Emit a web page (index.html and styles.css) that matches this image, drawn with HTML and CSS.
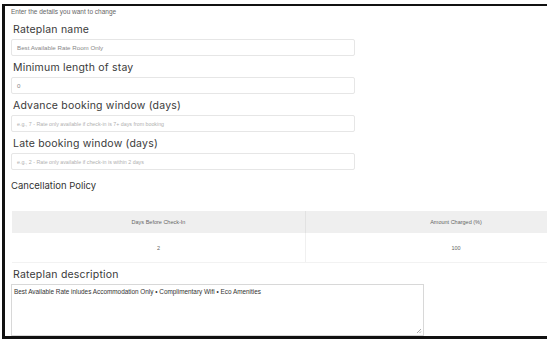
FILE: index.html
```html
<!DOCTYPE html>
<html lang="en">
<head>
    <meta charset="UTF-8">
    <meta name="viewport" content="width=device-width, initial-scale=1.0">
    <title>Edit Rateplan</title>
    <link rel="stylesheet" href="styles.css">
</head>
<body>
    <div class="frame">
        <p class="intro">Enter the details you want to change</p>

        <label class="field-label">Rateplan name</label>
        <div class="field-input">Best Available Rate Room Only</div>

        <label class="field-label">Minimum length of stay</label>
        <div class="field-input">0</div>

        <label class="field-label">Advance booking window (days)</label>
        <div class="field-input placeholder">e.g., 7 - Rate only available if check-in is 7+ days from booking</div>

        <label class="field-label">Late booking window (days)</label>
        <div class="field-input placeholder">e.g., 2 - Rate only available if check-in is within 2 days</div>

        <h3 class="section-title">Cancellation Policy</h3>

        <table class="policy-table">
            <thead>
                <tr>
                    <th class="col-days">Days Before Check-In</th>
                    <th>Amount Charged (%)</th>
                </tr>
            </thead>
            <tbody>
                <tr>
                    <td>2</td>
                    <td>100</td>
                </tr>
            </tbody>
        </table>

        <label class="field-label desc-label">Rateplan description</label>
        <div class="desc-box">
            Best Available Rate inludes Accommodation Only • Complimentary Wifi • Eco Amenities
            <svg class="grip" width="6" height="6" viewBox="0 0 6 6">
                <path d="M5 1 L1 5 M5 3.5 L3.5 5" stroke="#999" stroke-width="0.8"/>
            </svg>
        </div>
    </div>
</body>
</html>
```

FILE: styles.css
```css
body {
    margin: 0;
    background: #fff;
    overflow: hidden;
    font-family: "Inter", "Liberation Sans", sans-serif;
    color: #333;
}
.frame {
    margin: 4px 0 0 2px;
    width: 640px;
    height: 335px;
    box-sizing: border-box;
    border-top: 2px solid #111;
    border-left: 3px solid #111;
    border-bottom: 3px solid #111;
    padding: 2px 0 0 6px;
    display: flex;
    flex-direction: column;
    align-items: flex-start;
}
.intro {
    margin: 0;
    line-height: 8px;
    font-family: "Liberation Sans", sans-serif;
    font-size: 6.5px;
    color: #666;
}
.field-label {
    display: block;
    font-size: 10.5px;
    line-height: 13px;
    color: #3a3a3a;
    margin: 5px 0 3px 2px;
    letter-spacing: 0.2px;
}
.field-label:first-of-type {
    margin-top: 7px;
}
.field-input {
    width: 344px;
    height: 17px;
    box-sizing: border-box;
    border: 1px solid #e6e6e6;
    border-radius: 2px;
    padding: 0 5px;
    display: flex;
    align-items: center;
    font-family: "Liberation Sans", sans-serif;
    font-size: 6.2px;
    color: #888;
}
.placeholder {
    font-size: 5.3px;
    color: #b0b0b0;
}
.section-title {
    margin: 10px 0 0 0;
    font-size: 9.5px;
    line-height: 12px;
    font-weight: normal;
    color: #333;
}
.policy-table {
    margin: 19px 0 0 1px;
    width: 595px;
    border-collapse: collapse;
    font-family: "Liberation Sans", sans-serif;
    font-size: 5.5px;
    color: #666;
}
.policy-table .col-days {
    width: 293px;
}
.policy-table th {
    background: #efefef;
    font-weight: normal;
    height: 22px;
    padding: 0;
    border-right: 1px solid #e2e2e2;
}
.policy-table td {
    height: 29px;
    padding: 0;
    text-align: center;
    border-right: 1px solid #f0f0f0;
    border-bottom: 1px solid #f2f2f2;
}
.desc-label {
    margin-top: 5px;
}
.desc-box {
    position: relative;
    width: 413px;
    height: 52px;
    box-sizing: border-box;
    border: 1px solid #d8d8d8;
    padding: 3px 2px;
    font-family: "Liberation Sans", sans-serif;
    font-size: 6.4px;
    color: #333;
}
.grip {
    position: absolute;
    right: 1px;
    bottom: 1px;
}
```
